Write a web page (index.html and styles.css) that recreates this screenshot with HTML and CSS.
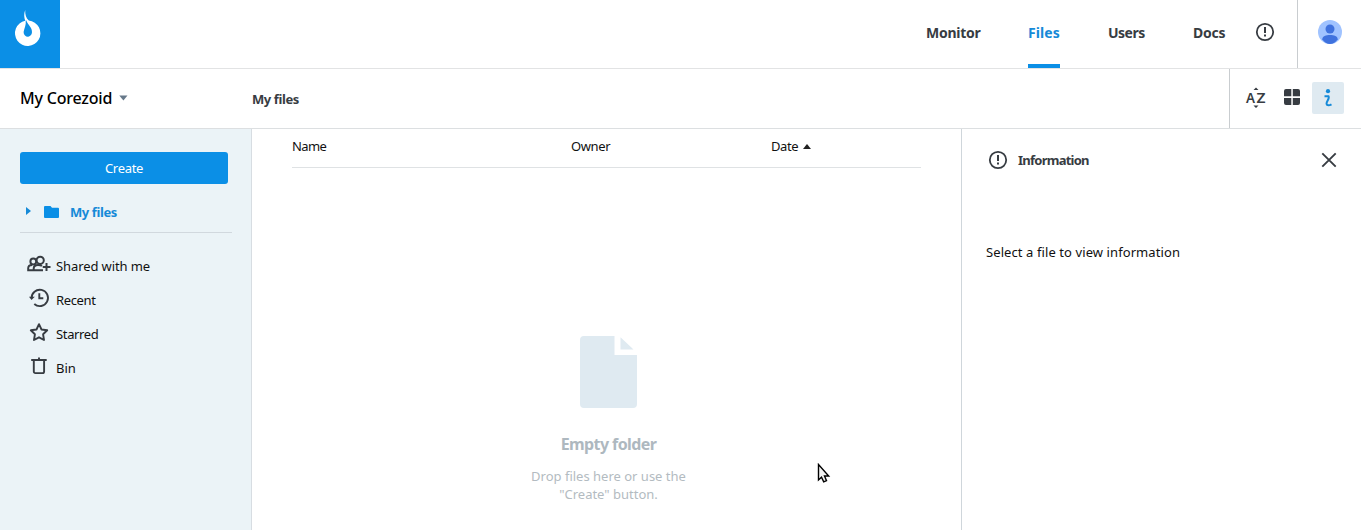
FILE: index.html
```html
<!DOCTYPE html>
<html lang="en">
<head>
<meta charset="utf-8">
<title>My Corezoid</title>
<link rel="stylesheet" href="styles.css">
</head>
<body>
<header class="header">
  <a class="logo" aria-label="Corezoid">
    <svg width="60" height="68" viewBox="0 0 60 68"><path fill="#fff" fill-rule="evenodd" d="M25.200 10C23.600 14 24.200 17.500 25.200 20.800A12.700 12.700 0 1 0 28.800 20.600C26 18 25 14.500 25.200 10ZM25.700 20.500C26.300 25 24.300 28 23.600 32A4.200 4.700 0 1 0 31.900 31C31.700 27 27.500 24.500 26.400 20.500Z"/></svg>
  </a>
  <nav class="nav">
    <a class="nav-link monitor">Monitor</a>
    <a class="nav-link files active">Files</a>
    <a class="nav-link users">Users</a>
    <a class="nav-link docs">Docs</a>
  </nav>
  <svg class="notice" width="20" height="20" viewBox="0 0 20 20"><circle cx="10" cy="10" r="8.200" fill="none" stroke="#373c42" stroke-width="1.800"/><path d="M10 5v6M10 12.400v2" stroke="#373c42" stroke-width="2"/></svg>
  <div class="account">
    <svg width="24" height="24" viewBox="0 0 24 24"><circle cx="12" cy="12" r="12" fill="#a0c3ff"/><circle cx="12" cy="9" r="4.500" fill="#3f72de"/><path fill="#3f72de" d="M4.300 19.300C4.300 16 8 15 12 15s7.700 1 7.700 4.300C18 22.400 15 24 12 24s-6-1.600-7.700-4.700Z"/></svg>
  </div>
</header>
<div class="bar">
  <div class="workspace"><span class="workspace-name">My Corezoid</span><svg width="9" height="6" viewBox="0 0 9 6"><path d="M.3.500h8.200L4.400 5.500z" fill="#67798a"/></svg></div>
  <div class="crumb">My files</div>
  <div class="tools">
    <svg class="tool" width="24" height="24" viewBox="0 0 24 24"><path d="M9.500 4 12 1.500l2.500 2.500zM9.500 19.500 12 22l2.500-2.500z" fill="#373c42"/><text class="sort-letter" x="2" y="17" textLength="9" lengthAdjust="spacingAndGlyphs">A</text><text class="sort-letter" x="12.500" y="17" textLength="9" lengthAdjust="spacingAndGlyphs">Z</text></svg>
    <svg class="tool grid" width="16" height="16" viewBox="0 0 16 16" fill="#373c42"><path d="M2 0h5.300v7.200H0V2a2 2 0 0 1 2-2ZM8.800 0H14a2 2 0 0 1 2 2v5.200H8.800ZM0 8.900h7.300V16H2a2 2 0 0 1-2-2ZM8.800 8.900H16V14a2 2 0 0 1-2 2H8.800Z"/></svg>
    <div class="info-toggle"><svg width="32" height="32" viewBox="0 0 32 32"><circle cx="16" cy="9.200" r="2.100" fill="#168ad8"/><path d="M12.500 14.200H16.500C18 16.500 14.200 19.500 14.500 21.800C14.900 23.900 17.500 23.500 19.500 22.300" fill="none" stroke="#168ad8" stroke-width="2"/></svg></div>
  </div>
</div>
<main class="layout">
  <aside class="sidebar">
    <button class="create">Create</button>
    <div class="root">
      <svg width="5" height="8" viewBox="0 0 5 8"><path d="M0 0l5 4-5 4z" fill="#168ad8"/></svg>
      <svg class="folder" width="15" height="12" viewBox="0 0 15 12"><path d="M1 0h5.500L8 1.800h6a1 1 0 0 1 1 1V11a1 1 0 0 1-1 1H1a1 1 0 0 1-1-1V1a1 1 0 0 1 1-1Z" fill="#0b8fe6"/></svg>
      <span class="root-name">My files</span>
    </div>
    <ul class="menu">
      <li><svg width="24" height="24" viewBox="0 0 24 24" fill="none" stroke="#373c42" stroke-width="2"><circle cx="6.300" cy="9.500" r="2.900"/><circle cx="13.200" cy="8.300" r="3.600"/><path d="M16 18.200H1.200V16.200C1.200 13.900 3 12.900 5.200 12.900M6.700 18V16.500C6.700 13.800 8.800 12.900 11 12.900c1.700 0 3 .300 4 1M19.500 11v8M15.700 15H23.500"/></svg><span class="shared">Shared with me</span></li>
      <li><svg width="24" height="24" viewBox="0 0 24 24" fill="none" stroke="#373c42" stroke-width="1.900"><path d="M4.600 12.300A8.200 8.200 0 1 1 7.300 18M12.300 7.300v5h4"/><path d="M2 10.700 4.500 14l3.300-3.300z" fill="#373c42" stroke="none"/></svg><span class="recent">Recent</span></li>
      <li><svg width="24" height="24" viewBox="0 0 24 24" fill="none" stroke="#373c42" stroke-width="1.900" stroke-linejoin="round"><path d="M12 4.200l2.500 5.300 5.700.8-4.100 4 .9 5.700-5-2.700-5 2.700.9-5.700-4.100-4 5.700-.8z"/></svg><span class="starred">Starred</span></li>
      <li><svg width="24" height="24" viewBox="0 0 24 24" fill="none" stroke="#373c42" stroke-width="1.900"><path d="M4.200 6h15.500M6.800 6v11.500a1.600 1.600 0 0 0 1.600 1.600h7.100a1.600 1.600 0 0 0 1.600-1.600V6M12 3.500v2.500"/></svg><span class="bin">Bin</span></li>
    </ul>
  </aside>
  <section class="content">
    <div class="table-head">
      <span class="name">Name</span>
      <span class="owner">Owner</span>
      <span class="date">Date<svg width="8" height="5" viewBox="0 0 8 5"><path d="M0 5 4 0l4 5z" fill="#222"/></svg></span>
    </div>
    <div class="empty">
      <svg width="57" height="72" viewBox="0 0 57 72" fill="#dfeaf1"><path d="M4 0h30.500v19H57v49a4 4 0 0 1-4 4H4a4 4 0 0 1-4-4V4a4 4 0 0 1 4-4Z"/><path d="M40.500 1.200v12.200h13z"/></svg>
      <h2 class="empty-title">Empty folder</h2>
      <p class="empty-text">Drop files here or use the<br>"Create" button.</p>
    </div>
  </section>
  <aside class="details">
    <div class="details-head">
      <svg width="20" height="20" viewBox="0 0 20 20"><circle cx="10" cy="10" r="8.200" fill="none" stroke="#373c42" stroke-width="1.800"/><path d="M10 5v6M10 12.400v2" stroke="#373c42" stroke-width="2"/></svg>
      <span class="details-title">Information</span>
      <svg class="close" width="16" height="16" viewBox="0 0 16 16"><path d="M1.300 1.300l13.400 13.400M14.700 1.300 1.300 14.700" stroke="#373c42" stroke-width="1.900"/></svg>
    </div>
    <p class="details-text">Select a file to view information</p>
  </aside>
</main>
<svg class="cursor" width="14" height="21" viewBox="0 0 14 21"><path d="M1.500 1.500v15.500l3-2.800 2.200 4.600 2.800-1.200-2-4.600h4.200z" fill="#f4f4f4" stroke="#000" stroke-width="1.400"/></svg>
</body>
</html>
```
FILE: styles.css
```css
* { box-sizing: border-box; }
body { margin: 0; height: 530px; overflow: hidden; display: flex; flex-direction: column; background: #fff; color: #111; font: 13px/18px "Noto Sans", sans-serif; }
svg { display: block; flex: none; }
.header { height: 69px; display: flex; flex: none; border-bottom: 1px solid #e2e3e4; color: #373c42; }
.logo { width: 60px; height: 68px; background: #0b8fe6; }
.nav { display: flex; gap: 48px; margin-left: auto; }
.nav-link { height: 68px; padding-top: 23px; font-size: 14px; line-height: 20px; font-weight: 700; letter-spacing: -0.25px; white-space: nowrap; }
.monitor { width: 54px; }
.files { width: 32px; letter-spacing: 0.1px; }
.users { width: 37px; letter-spacing: -0.5px; }
.docs { width: 32px; }
.active { color: #168ad8; border-bottom: 4px solid #0b8fe6; }
.notice { margin: 22px 22px 0 30px; }
.account { width: 64px; padding: 20px 0 0 20px; border-left: 1px solid #c9cdd0; }
.bar { height: 60px; display: flex; flex: none; border-bottom: 1px solid #dcdfe1; }
.workspace { width: 252px; padding: 0 0 2px 20px; display: flex; align-items: center; gap: 7px; font-size: 16px; font-weight: 500; color: #000; }
.workspace-name { width: 92px; letter-spacing: -0.2px; white-space: nowrap; }
.crumb { padding-top: 21px; font-weight: 700; letter-spacing: -0.4px; color: #373c42; }
.tools { width: 132px; margin-left: auto; padding: 0 17px 2px 14px; display: flex; align-items: center; border-left: 1px solid #c9cdd0; }
.sort-letter { font: 600 15px "Noto Sans", sans-serif; fill: #373c42; }
.grid { margin: -2px 0 0 16px; }
.info-toggle { width: 32px; height: 32px; margin-left: auto; background: #dfeaf1; border-radius: 2px; }
.layout { flex: 1; min-height: 0; display: flex; }
.sidebar { width: 252px; padding: 23px 19px 0 20px; background: #ebf3f7; border-right: 1px solid #d7dde2; }
.create { display: block; width: 208px; height: 32px; padding: 0; border: 0; border-radius: 3px; background: #0b8fe6; color: #fff; font: 13px "Noto Sans", sans-serif; letter-spacing: -0.3px; }
.root { height: 49px; display: flex; align-items: center; padding-left: 6px; border-bottom: 1px solid #d1d8de; }
.root svg { margin-bottom: -8px; }
.root svg:first-child { margin-bottom: -6px; }
.folder { margin-left: 13px; }
.root-name { margin: 8px 0 0 11px; color: #168ad8; font-weight: 700; letter-spacing: -0.4px; }
.menu { list-style: none; margin: 17px 0 0; padding: 0 0 0 7px; }
.menu li { display: flex; height: 34px; gap: 5px; }
.menu svg { margin-top: 2px; }
.menu span { padding-top: 7px; }
.shared { letter-spacing: -0.1px; }
.recent, .starred { letter-spacing: -0.35px; }
.content { width: 710px; border-right: 1px solid #cfd6db; }
.table-head { display: flex; height: 39px; width: 629px; margin-left: 40px; padding-top: 8px; border-bottom: 1px solid #dfe2e4; letter-spacing: -0.4px; }
.name { width: 279px; letter-spacing: -0.6px; }
.owner { width: 200px; }
.date { display: flex; gap: 5px; }
.date svg { margin-top: 7px; }
.empty { display: flex; flex-direction: column; align-items: center; padding: 168px 0 0 4px; }
.empty-title { margin: 24px 0 0; font-size: 16px; line-height: 24px; letter-spacing: -0.6px; color: #aeb8bf; }
.empty-text { margin: 11px 0 0; text-align: center; color: #b3bbc1; }
.details { flex: 1; padding: 21px 24px 0; }
.details-head { display: flex; align-items: center; padding-left: 2px; }
.details-title { margin-left: 10px; font-weight: 700; letter-spacing: -0.75px; color: #373c42; }
.close { margin-left: auto; }
.details-text { margin: 73px 0 0; letter-spacing: 0.09px; }
.cursor { position: absolute; left: 817px; top: 463px; }
```
